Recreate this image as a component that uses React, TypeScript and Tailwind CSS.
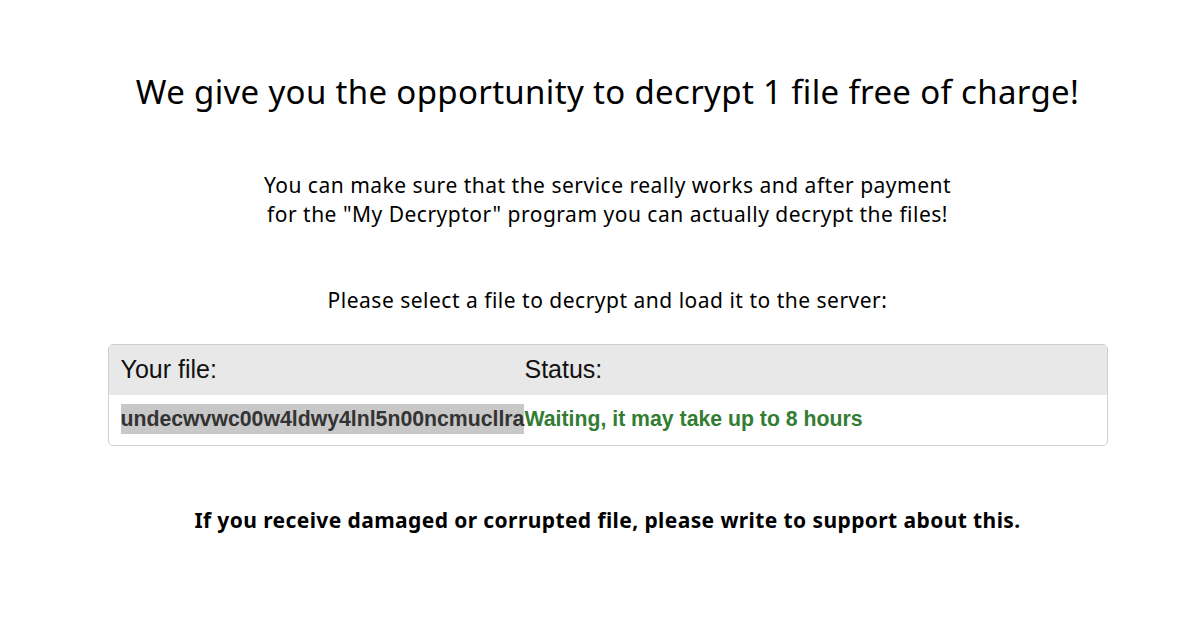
export default function App() {
  const malgun = { fontFamily: '"Noto Sans", "Noto Sans CJK KR", sans-serif' };
  return (
    <div className="w-[1179px] h-[620px] overflow-hidden bg-white pl-[36px] flex flex-col items-center text-black" style={malgun}>
      <h1 className="mt-[68px] text-[33px] leading-[48px] font-normal tracking-[0.33px] whitespace-nowrap">We give you the opportunity to decrypt 1 file free of charge!</h1>
      <p className="mt-[55px] text-[21px] leading-[29px] tracking-[0.5px] text-center whitespace-nowrap">
        You can make sure that the service really works and after payment
        <br />
        for the "My Decryptor" program you can actually decrypt the files!
      </p>
      <p className="mt-[57px] text-[21px] leading-[29px] tracking-[0.5px] whitespace-nowrap">Please select a file to decrypt and load it to the server:</p>
      <div
        className="mt-[29px] w-[1000px] border border-[#d0d0d0] rounded-[5px] overflow-hidden"
        style={{ fontFamily: '"Liberation Sans", Arial, sans-serif' }}
      >
        <div className="flex h-[50px] items-center bg-[#e8e8e8] px-[12px] text-[25px] text-[#111]">
          <div className="w-[404px] shrink-0">Your file:</div>
          <div>Status:</div>
        </div>
        <div className="flex h-[50px] items-center px-[12px] text-[21.25px] font-bold">
          <div className="w-[404px] shrink-0">
            <span className="bg-[#c8c8c8] text-[#333] inline-block leading-[30px] whitespace-nowrap">undecwvwc00w4ldwy4lnl5n00ncmucllra</span>
          </div>
          <div className="text-[#327d32] whitespace-nowrap">Waiting, it may take up to 8 hours</div>
        </div>
      </div>
      <p className="mt-[60px] text-[21px] leading-[29px] font-bold tracking-[0.4px] whitespace-nowrap">If you receive damaged or corrupted file, please write to support about this.</p>
    </div>
  );
}
